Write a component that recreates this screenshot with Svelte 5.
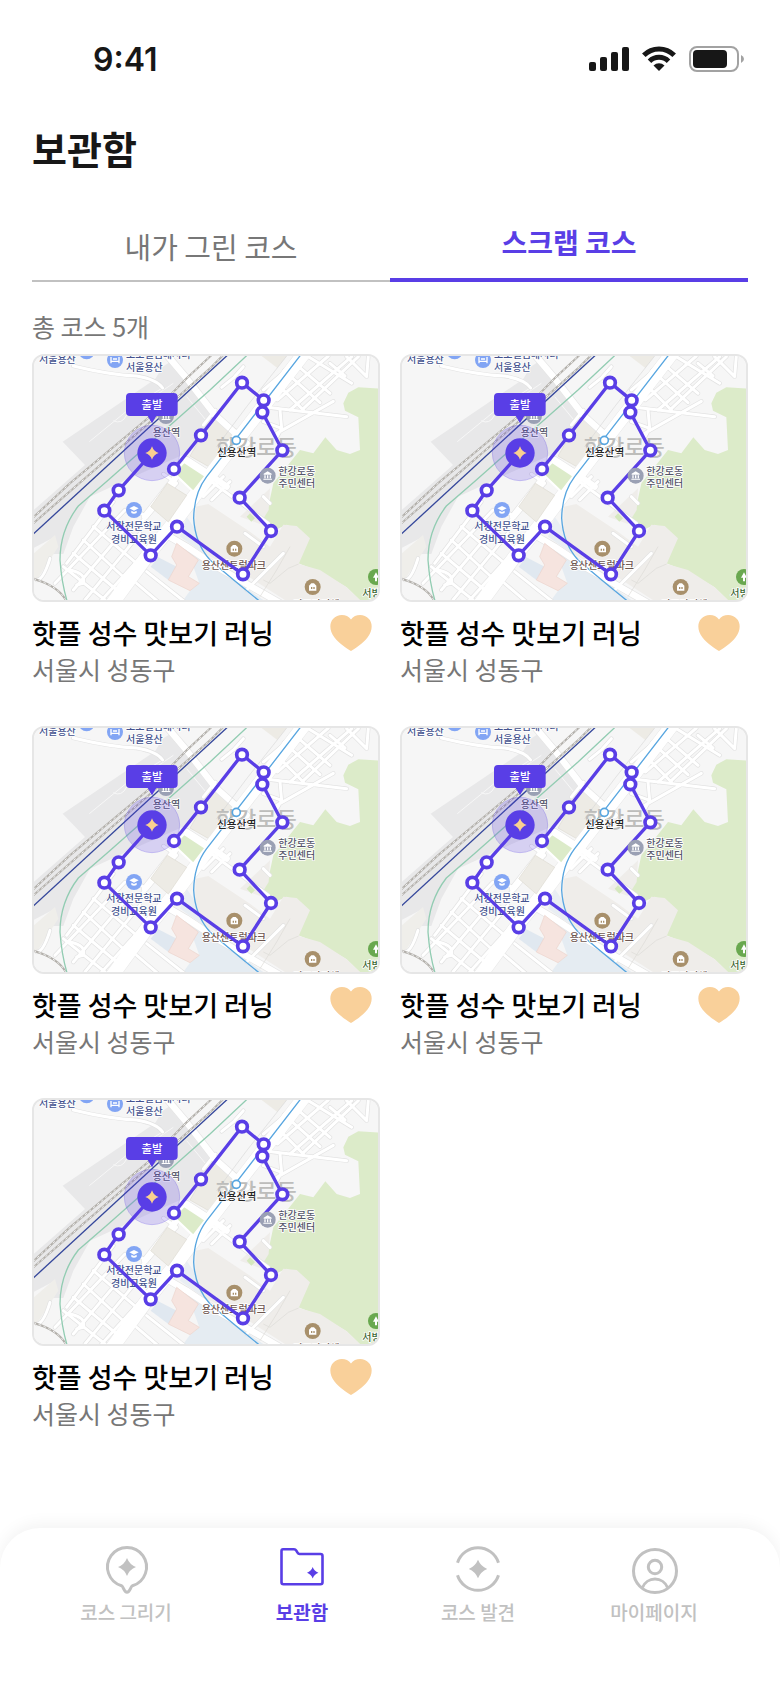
<script lang="ts">
  type Course = { id: number; title: string; location: string; scrapped: boolean };

  let activeTab = $state('scrap');
  let activeMenu = $state('storage');

  let courses: Course[] = $state(
    [1, 2, 3, 4, 5].map((id) => ({
      id,
      title: '핫플 성수 맛보기 러닝',
      location: '서울시 성동구',
      scrapped: true,
    }))
  );

  const tabs = [
    { key: 'mine', label: '내가 그린 코스' },
    { key: 'scrap', label: '스크랩 코스' },
  ];

  const menus = [
    { key: 'draw', label: '코스 그리기' },
    { key: 'storage', label: '보관함' },
    { key: 'discover', label: '코스 발견' },
    { key: 'mypage', label: '마이페이지' },
  ];

  // course points in map units, the first one is the start
  const points = [
    [366, 309], [266, 421], [223, 482], [362, 616], [441, 530], [639, 673], [723, 543],
    [629, 443], [757, 301], [697, 187], [701, 151], [636, 98], [513, 256], [432, 357],
  ];
  const route = points.map((p) => p.join(',')).join(' ');

  const narrowRoads = [
    'M130 48 Q240 75 320 78 Q380 88 398 114',
    'M520 225 L556 180 M575 112 L612 82 L640 50',
    'M712 172 L950 200 M740 250 L910 154 M700 215 L755 235 L740 262 M750 180 L755 235',
    'M742 150 L895 18 M780 180 L965 20 M820 176 L985 20 M700 120 L820 18',
    'M792 38 L900 130 M835 20 L965 100 M762 62 L870 158 M740 100 L820 180 M900 40 L945 78',
    'M1015 18 L1010 80 L950 20',
    'M545 395 L715 520 M520 440 L580 380 M545 450 L600 395 M700 440 L720 460',
    'M400 372 L440 400 L350 500 M300 470 L350 500 L330 520',
    'M250 455 L110 640 M285 480 L75 700 M300 520 L130 720 M330 550 L165 750 M365 585 L215 750',
    'M225 485 L345 590 M190 530 L320 640 M160 570 L290 690 M130 610 L260 720 M100 650 L225 750',
    'M60 625 Q40 690 20 690 M120 660 Q170 670 160 700 L140 705',
    'M350 665 L470 760 M320 700 L390 760',
    'M645 550 L700 590 M760 610 L650 720',
  ];

  const wideRoads = [
    'M415 20 L470 85 L555 195 L650 280',
    'M410 555 L470 590 L560 650 L760 765',
    'M470 330 L540 375 L590 410',
    'M435 385 L345 500',
  ];

  const railways = 'M10 520L165 385L350 225L545 50L580 15M10 502L120 400L350 208L470 85L545 15M10 686Q90 710 110 756';
</script>

{#snippet pin(x: number, y: number, color: string, kind: string)}
  <g transform="translate({x} {y})">
    <circle r="24" fill={color} />
    {#if kind === 'bed'}
      <path d="M-12 -9V10M-12 4H12V10M12 4V-9M-6 -3H6" stroke="#fff" stroke-width="4" fill="none" />
    {:else if kind === 'school'}
      <path d="M-14 -5L0 -12L14 -5L0 2ZM-8 2V9Q0 14 8 9V2L0 6Z" fill="#fff" />
    {:else if kind === 'office'}
      <path d="M-12 -6L0 -13L12 -6V-3H-12ZM-10 -1H-6V8H-10ZM-2 -1H2V8H-2ZM6 -1H10V8H6ZM-13 9H13V12H-13Z" fill="#fff" />
    {:else if kind === 'tree'}
      <path d="M0 -14L9 2H3V13H-3V2H-9Z" fill="#fff" />
    {:else}
      <path d="M-11 -4L-4 -11H4L11 -4V11H-11Z" fill="#fff" />
      <path d="M-5 0H-1V6H-5ZM2 0H6V6H2Z" fill={color} />
    {/if}
  </g>
{/snippet}

{#snippet courseMap()}
  <svg class="map" viewBox="12 18 1032 732" role="img" aria-label="코스 지도">
    <rect x="0" y="0" width="1060" height="770" fill="#f6f6f6" />

    <!-- rail yard -->
    <path d="M98 275L375 88L398 50L430 30L500 110L560 200L470 310L310 380L180 440L130 530L100 612L60 612L75 560L0 600V490L165 345Z" fill="#e8e8e9" />
    <path d="M0 620L75 555L85 590L20 690H0Z" fill="#efeeea" />
    <path d="M178 275L300 175L400 112M250 212Q275 225 290 195L430 100M470 140L540 225" fill="none" stroke="#f7f7f7" stroke-width="3" />

    <!-- parks and buildings -->
    <path d="M1050 116L985 112L955 128L940 160L945 182L985 202L990 300L960 312L920 300L886 262L850 310L810 300L770 350L730 400L715 470L690 510L735 540L770 524L810 540L835 565L805 640L870 665L950 712L1000 760H1050Z" fill="#dcebc9" />
    <path d="M497 470L535 462L660 545L720 590L760 524L800 528L840 565L806 642L870 660L950 712L1000 760H780L640 670L520 610L495 545Z" fill="#efedea" />
    <path d="M630 500L720 415L716 480L690 522Z" fill="#efedea" />
    <path d="M505 275L553 198L632 245L545 355L480 318Z" fill="#edebe5" stroke="#dedbd2" stroke-width="2" />
    <path d="M695 18H770L742 54Z" fill="#edebe5" />
    <path d="M472 600L560 655L700 750H460L480 722L508 700Z" fill="#e5ecf2" />
    <path d="M362 650L385 622L440 650L415 690Z" fill="#e0e8f0" />
    <path d="M497 540L520 610L450 560L470 500Z" fill="#e9eef3" />
    <path d="M650 500L660 490L675 505L664 515Z" fill="#d5e8be" />

    <!-- roads -->
    {#each narrowRoads as d}
      <path {d} class="road" stroke="#e2e2e2" stroke-width="13" />
    {/each}
    {#each wideRoads as d}
      <path {d} class="road" stroke="#e5e5e5" stroke-width="23" />
    {/each}
    <path d="M830 0L560 350L450 495L350 620L240 770" class="road" stroke="#e8e8e8" stroke-width="43" />
    {#each narrowRoads as d}
      <path {d} class="road" stroke="#fff" stroke-width="9" />
    {/each}
    {#each wideRoads as d}
      <path {d} class="road" stroke="#fff" stroke-width="19" />
    {/each}
    <path d="M830 0L560 350L450 495L350 620L240 770" class="road" stroke="#fff" stroke-width="40" />
    <path d="M770 18L650 170L560 290" class="road" stroke="#d9d9d9" stroke-width="2" />
    <path d="M362 470L412 400L470 436L415 516Z" fill="#edebe5" stroke="#dedbd2" stroke-width="2" />
    <path d="M432 370L462 336L526 378L490 425Z" fill="#dcebc9" stroke="#fff" stroke-width="6" />
    <path d="M440 580L505 630L475 680L508 700L480 722L415 690L440 645L425 620Z" fill="#f6e4df" stroke="#ecd3cc" stroke-width="2" />
    <path d="M780 590L740 660L690 740M806 642L775 655L720 700L700 690" fill="none" stroke="#dddbd7" stroke-width="2" />

    <!-- railways and subway lines -->
    <path d={railways} class="rail" />
    <path d={railways} class="rail ties" />
    <path d="M10 552L592 16" fill="none" stroke="#35479b" stroke-width="4" />
    <path d="M652 15L540 120L235 390L145 468Q90 540 90 630Q95 700 112 756" fill="none" stroke="#92ccb2" stroke-width="4" />
    <path d="M812 15L530 380Q492 430 491 505Q495 580 540 630Q610 690 692 756" fill="none" stroke="#58a6e0" stroke-width="4" />

    <!-- places -->
    <text x="557" y="316" class="district">한강로동</text>
    {@render pin(170, 4, '#82a5f4', 'home')}
    {@render pin(255, 30, '#82a5f4', 'bed')}
    {@render pin(408, 198, '#9aa0b4', 'office')}
    {@render pin(312, 480, '#82a5f4', 'school')}
    {@render pin(613, 596, '#a8906b', 'home')}
    {@render pin(848, 711, '#a8906b', 'home')}
    {@render pin(1038, 681, '#69a84f', 'tree')}
    <g class="place navy">
      <text x="27" y="38">서울용산</text>
      <text x="288" y="25">노보텔앰배서더</text>
      <text x="288" y="62">서울용산</text>
      <text x="229" y="540">서강전문학교</text>
      <text x="243" y="578">경비교육원</text>
    </g>
    <g class="place gray">
      <text x="368" y="259">용산역</text>
    </g>
    <g class="place brown">
      <text x="515" y="657">용산센트럴파크</text>
      <text x="790" y="775">리포라티체</text>
    </g>
    <g class="place green">
      <text x="997" y="742">서빙고</text>
    </g>

    <!-- course -->
    <circle cx="366" cy="309" r="83" fill="#593ee6" fill-opacity="0.2" stroke="#593ee6" stroke-opacity="0.25" stroke-width="3" />
    <polyline points={route} fill="none" stroke="#593ee6" stroke-width="10" stroke-linejoin="round" />
    {#each points.slice(1) as [x, y]}
      <circle cx={x} cy={y} r="16" fill="#fff" stroke="#593ee6" stroke-width="11" />
    {/each}
    <circle cx="366" cy="309" r="44" fill="#593ee6" />
    <path d="M366 289Q371 304 386 309Q371 314 366 329Q361 314 346 309Q361 304 366 289Z" fill="#fad090" />
    {@render pin(713, 377, '#9aa0b4', 'office')}
    <g class="place gray">
      <text x="745" y="374">한강로동</text>
      <text x="745" y="412">주민센터</text>
    </g>
    <circle cx="619" cy="271" r="12" fill="#fff" stroke="#58a6e0" stroke-width="5" />
    <text x="561" y="319" class="station">신용산역</text>
    <path d="M300 129H431Q443 129 443 141V186Q443 198 431 198H379L366 220L353 198H300Q288 198 288 186V141Q288 129 300 129Z" fill="#593ee6" />
    <text x="366" y="176" class="start">출발</text>
  </svg>
{/snippet}

<div class="screen">
  <div class="status-bar">
    <span class="time">9:41</span>
    <div class="status-icons">
      <svg width="40" height="26" viewBox="0 0 40 26" fill="#171717">
        <rect x="0" y="16" width="7" height="9" rx="2" />
        <rect x="11" y="11" width="7" height="14" rx="2" />
        <rect x="22" y="6" width="7" height="19" rx="2" />
        <rect x="33" y="1" width="7" height="24" rx="2" />
      </svg>
      <svg width="34" height="26" viewBox="0 0 34 26" fill="none" stroke="#171717" stroke-width="5">
        <path d="M1.8 9.2A21.5 21.5 0 0 1 32.2 9.2" />
        <path d="M7.5 15.2A13.5 13.5 0 0 1 26.5 15.2" />
        <path d="M17 25L11.5 19.5A8 8 0 0 1 22.5 19.5Z" fill="#171717" stroke="none" />
      </svg>
      <svg width="55" height="26" viewBox="0 0 55 26">
        <rect x="1" y="1" width="48" height="24" rx="7" fill="none" stroke="#a2a2a2" stroke-width="2" />
        <rect x="4" y="4" width="34" height="18" rx="4" fill="#171717" />
        <path d="M52 9Q55 10.5 55 13Q55 15.5 52 17Z" fill="#a2a2a2" />
      </svg>
    </div>
  </div>

  <main>
    <h1>보관함</h1>

    <div class="tabs" role="tablist">
      {#each tabs as tab}
        <button
          role="tab"
          class="tab"
          class:active={activeTab === tab.key}
          aria-selected={activeTab === tab.key}
          onclick={() => (activeTab = tab.key)}
        >
          {tab.label}
        </button>
      {/each}
    </div>

    <p class="count">총 코스 {courses.length}개</p>

    <ul class="courses">
      {#each courses as course (course.id)}
        <li>
          <div class="thumb">{@render courseMap()}</div>
          <div class="title-row">
            <h2>{course.title}</h2>
            <button
              class="heart"
              class:off={!course.scrapped}
              aria-label="스크랩"
              aria-pressed={course.scrapped}
              onclick={() => (course.scrapped = !course.scrapped)}
            >
              <svg width="42" height="36" viewBox="0 0 42 36">
                <path d="M21 36C17 33.5 9 28.5 4.5 22.5C-0.5 16 -1 8.5 3 4C8 -1.5 17 -1 21 4.5C25 -1 34 -1.5 39 4C43 8.5 42.5 16 37.5 22.5C33 28.5 25 33.5 21 36Z" />
              </svg>
            </button>
          </div>
          <p class="location">{course.location}</p>
        </li>
      {/each}
    </ul>
  </main>

  <nav>
    {#each menus as menu}
      <button class="menu" class:active={activeMenu === menu.key} onclick={() => (activeMenu = menu.key)}>
        <svg width="52" height="52" viewBox="0 0 52 52" fill="none" stroke="currentColor" stroke-width="3">
          {#if menu.key === 'draw'}
            <path d="M21.5 41.7A19.5 19.5 0 1 1 32.5 41.7C30.5 42.5 30 48.3 27 48.3C24 48.3 23.5 42.5 21.5 41.7Z" />
            <path d="M27 14Q29.5 20.5 36 23Q29.5 25.5 27 32Q24.5 25.5 18 23Q24.5 20.5 27 14Z" fill="currentColor" stroke="none" />
          {:else if menu.key === 'storage'}
            <path d="M7 5.3H18Q19.5 5.3 20.3 6.7L21.5 8.7Q22.3 10 23.5 10H44.5Q46.5 10 46.5 12V38.3Q46.5 40.3 44.5 40.3H7.5Q5.5 40.3 5.5 38.3V7Q5.5 5.3 7 5.3Z" stroke-width="2.6" />
            <path d="M36.7 23Q38.2 27.2 42.4 28.7Q38.2 30.2 36.7 34.4Q35.2 30.2 31 28.7Q35.2 27.2 36.7 23Z" fill="currentColor" stroke="none" />
          {:else if menu.key === 'discover'}
            <path d="M5.5 18.7A21.5 21.5 0 0 1 46.5 18.7M5.5 31.3A21.5 21.5 0 0 0 46.5 31.3" />
            <path d="M26 15.8Q28.7 22.3 35.2 25Q28.7 27.7 26 34.2Q23.3 27.7 16.8 25Q23.3 22.3 26 15.8Z" fill="currentColor" stroke="none" />
          {:else}
            <circle cx="27" cy="27" r="21.5" />
            <circle cx="27" cy="23" r="6.7" />
            <path d="M14.5 43.5A13.5 13.5 0 0 1 39.5 43.5" />
          {/if}
        </svg>
        <span>{menu.label}</span>
      </button>
    {/each}
  </nav>
</div>

<style>
  :global(body) {
    margin: 0;
    background: #fff;
  }
  .screen {
    display: flex;
    flex-direction: column;
    min-height: 100vh;
    font-family: 'Noto Sans CJK KR', sans-serif;
    color: #171717;
  }
  button {
    padding: 0;
    border: none;
    background: none;
    font-family: inherit;
    cursor: pointer;
  }
  h1, h2, p, ul {
    margin: 0;
    padding: 0;
  }

  .status-bar {
    display: flex;
    justify-content: space-between;
    align-items: center;
    height: 118px;
    padding: 0 36px 0 93px;
    box-sizing: border-box;
  }
  .time {
    font-family: Inter, sans-serif;
    font-size: 32px;
    font-weight: 600;
  }
  .status-icons {
    display: flex;
    gap: 13px;
  }

  main {
    padding: 0 32px 32px;
  }
  h1 {
    font-size: 38px;
    line-height: 60px;
    font-weight: 700;
  }

  .tabs {
    display: flex;
    align-items: flex-end;
    margin-top: 32px;
  }
  .tab {
    flex: 1;
    height: 70px;
    border-bottom: 2px solid #c1c1c1;
    color: #777;
    font-size: 29px;
    line-height: 44px;
  }
  .tab.active {
    height: 72px;
    padding-bottom: 4px;
    border-bottom: 4px solid #593ee6;
    color: #593ee6;
    font-size: 28px;
    font-weight: 700;
  }

  .count {
    margin-top: 24px;
    color: #777;
    font-size: 25px;
    line-height: 40px;
  }

  .courses {
    display: grid;
    grid-template-columns: repeat(auto-fill, minmax(300px, 1fr));
    gap: 40px 20px;
    margin-top: 8px;
    list-style: none;
  }
  .thumb {
    overflow: hidden;
    border: 2px solid #e6e6e6;
    border-radius: 12px;
  }
  .map {
    display: block;
    width: 100%;
  }
  .road {
    fill: none;
    stroke-linecap: round;
    stroke-linejoin: round;
  }
  .rail {
    fill: none;
    stroke: #b3b0ab;
    stroke-width: 6px;
  }
  .rail.ties {
    stroke: #f2f2f2;
    stroke-width: 3px;
    stroke-dasharray: 8 8;
  }
  .place {
    font-size: 30px;
    font-weight: 500;
    stroke: #fff;
    stroke-width: 5px;
    stroke-linejoin: round;
    paint-order: stroke;
  }
  .navy {
    fill: #43528f;
  }
  .gray {
    fill: #55566a;
  }
  .brown {
    fill: #6d5650;
  }
  .green {
    fill: #3c6631;
  }
  .district {
    font-size: 66px;
    font-weight: 500;
    fill: #bdbdbb;
  }
  .station {
    font-size: 32px;
    font-weight: 500;
    fill: #222;
    stroke: #fff;
    stroke-width: 4px;
    paint-order: stroke;
  }
  .start {
    font-size: 34px;
    font-weight: 500;
    fill: #fff;
    text-anchor: middle;
  }

  .title-row {
    display: flex;
    justify-content: space-between;
    align-items: center;
    height: 38px;
    margin-top: 12px;
    padding-right: 8px;
  }
  h2 {
    color: #000;
    font-size: 27px;
    line-height: 38px;
    font-weight: 500;
    white-space: nowrap;
  }
  .heart svg {
    display: block;
    fill: #f9d09a;
  }
  .heart.off svg {
    fill: #ddd;
  }
  .location {
    color: #777;
    font-size: 25px;
    line-height: 34px;
  }

  nav {
    display: flex;
    height: 160px;
    margin-top: auto;
    padding: 16px 38px 0;
    box-sizing: border-box;
    border-radius: 40px 40px 0 0;
    background: #fff;
    box-shadow: 0 -4px 16px rgba(0, 0, 0, 0.05);
  }
  .menu {
    display: flex;
    flex: 1;
    flex-direction: column;
    align-items: center;
    align-self: flex-start;
    gap: 2px;
    color: #c1c1c1;
    font-size: 19px;
    line-height: 28px;
    font-weight: 500;
  }
  .menu.active {
    color: #593ee6;
    font-weight: 700;
  }
</style>
